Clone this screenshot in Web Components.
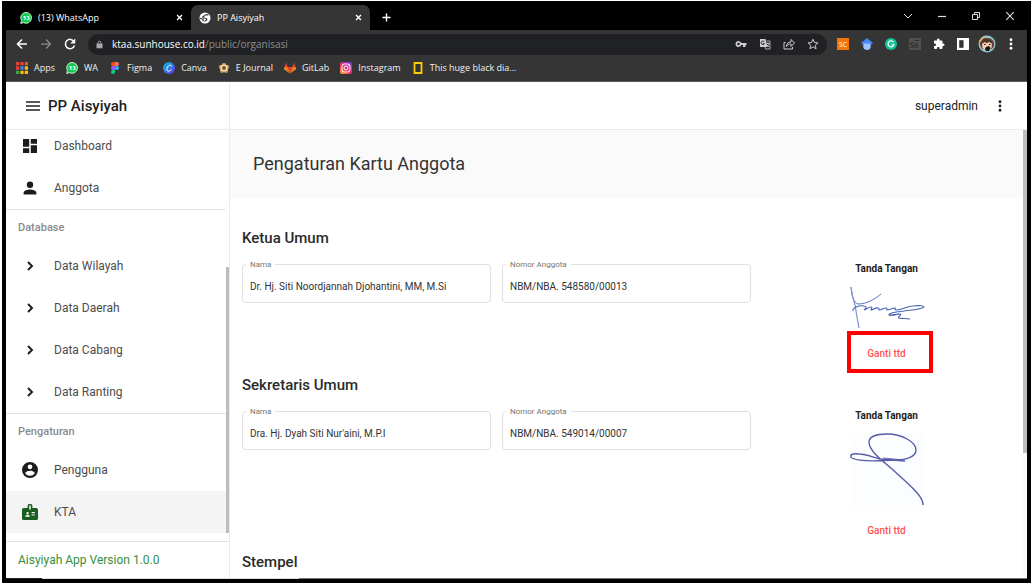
<!DOCTYPE html>
<html lang="id">
<head>
<meta charset="utf-8">
<meta name="viewport" content="width=device-width, initial-scale=1">
<title>PP Aisyiyah</title>
<style>
html, body { margin: 0; height: 100%; background: #fff; }
body { font-family: Roboto, "Liberation Sans", sans-serif; color: #212121; }
</style>
</head>
<body>
<browser-window>
  <browser-tabs slot="tabs"></browser-tabs>
  <browser-toolbar slot="toolbar"></browser-toolbar>
  <bookmark-bar slot="bookmarks"></bookmark-bar>
  <member-app></member-app>
</browser-window>
<script>
const ICONS = {
  whatsapp: '<svg viewBox="0 0 14 14"><path d="M.8 13.3 1.7 10A6.3 6.3 0 1 1 4.2 12.4z" fill="#16c750" stroke="#e8ffe8" stroke-width="1"/><text x="7.2" y="9.700" font-size="7" font-weight="700" text-anchor="middle" fill="#fff" font-family="Open Sans">13</text></svg>',
  globe: '<svg viewBox="0 0 24 24"><circle cx="12" cy="12" r="11" fill="#fff"/><path d="M19 6.500c-3-2-6-1-7 .5s-4 1-4.500 3 2 2.500 4.500 2.500 4 1 3.500 3-3 1-4 3.500" fill="none" stroke="#353535" stroke-width="2.400"/><path d="M2 13c2-.5 3 1 5 1.500s2 2.500 1 4" fill="none" stroke="#353535" stroke-width="2.400"/></svg>',
  close: '<svg viewBox="0 0 8 8"><path d="m1.2 1.2 5.6 5.6M6.8 1.2 1.2 6.8" stroke="currentColor" stroke-width="1.5" fill="none"/></svg>',
  plus: '<svg viewBox="0 0 10 10"><path d="M5 .5v9M.5 5h9" stroke="currentColor" stroke-width="1.6"/></svg>',
  caret: '<svg viewBox="0 0 10 10"><path d="m1 3 4 4 4-4" stroke="currentColor" fill="none"/></svg>',
  minimise: '<svg viewBox="0 0 10 10"><path d="M1 5.5h8" stroke="currentColor" stroke-width="1.2"/></svg>',
  restore: '<svg viewBox="0 0 10 10"><path d="M1.5 3.5h5v5h-5zM3.500 3.500v-2h5v5h-2" stroke="currentColor" fill="none"/></svg>',
  windowClose: '<svg viewBox="0 0 10 10"><path d="m1.200 1.200 7.600 7.600M8.800 1.200 1.200 8.800" stroke="currentColor" fill="none" stroke-width="1.100"/></svg>',
  back: '<svg viewBox="0 0 24 24"><path d="M22 12H4m8-9-9 9 9 9" fill="none" stroke="currentColor" stroke-width="3"/></svg>',
  forward: '<svg viewBox="0 0 24 24"><path d="M2 12h18m-8-9 9 9-9 9" fill="none" stroke="currentColor" stroke-width="2.500"/></svg>',
  reload: '<svg viewBox="0 0 24 24"><path d="M20 7A9.300 9.300 0 1 0 21 15" fill="none" stroke="currentColor" stroke-width="3"/><path d="M22.500 1v10h-10z" fill="currentColor"/></svg>',
  lock: '<svg viewBox="0 0 24 24"><path d="M18 9h-1V7A5 5 0 0 0 7 7v2H4v13h16V9zM9.200 9V7a2.800 2.800 0 0 1 5.600 0v2z" fill="currentColor"/></svg>',
  key: '<svg viewBox="0 0 24 24"><path d="M12.650 10a6 6 0 1 0 0 4H16v4h5v-4h2v-4zM7 14.500a2.500 2.500 0 1 1 0-5 2.500 2.500 0 0 1 0 5z" fill="currentColor"/></svg>',
  translate: '<svg viewBox="0 0 24 24"><path d="M2 2h11l4 16H2z" fill="currentColor"/><path d="M15 6h7v16h-9l-1-4M14 11h7m-3.500-2v2m2 0c-.5 3-2 5-4 7m0-5c1 2 3 4 5 5" fill="none" stroke="currentColor" stroke-width="1.600"/><path d="M10.500 7.500A3.500 3.500 0 1 0 11 11H8" fill="none" stroke="#202124" stroke-width="1.700"/></svg>',
  share: '<svg viewBox="0 0 24 24"><path d="M5 9H2v13h17v-4M7 17c0-6 3-9 9-9V3l7 7-7 7v-5c-4 0-7 1-9 5z" fill="none" stroke="currentColor" stroke-width="2"/></svg>',
  star: '<svg viewBox="0 0 24 24"><path d="m12 2.500 2.900 6.600 7.100.7-5.400 4.700 1.600 7L12 17.800l-6.200 3.700 1.600-7L2 9.800l7.100-.7z" fill="none" stroke="currentColor" stroke-width="2"/></svg>',
  sc: '<svg viewBox="0 0 12 12"><path d="M0 0h12v12H0z" fill="#f57408"/><text x="6" y="8.500" font-size="7" text-anchor="middle" fill="#fff" font-family="Open Sans">SC</text></svg>',
  scholar: '<svg viewBox="0 0 24 24"><path d="M12 0 0 10l6 5h12l6-5z" fill="#4285f4"/><circle cx="12" cy="16.500" r="7.500" fill="#a0c3ff"/><path d="M4.500 13.500Q12 5.500 19.500 13.500L17 11H7z" fill="#3367d6"/></svg>',
  grammarly: '<svg viewBox="0 0 24 24"><circle cx="12" cy="12" r="12" fill="#15c39a"/><path d="M17 8.500a6 6 0 1 0 .8 5H13" fill="none" stroke="#fff" stroke-width="2.400"/></svg>',
  selenium: '<svg viewBox="0 0 12 12"><path d="M0 0h12v12H0z" fill="#505050"/><text x="5" y="10" font-size="8" font-weight="700" text-anchor="middle" fill="#353535" font-family="Open Sans">Se</text><path d="M6 2.500h4" stroke="#2c2c2c"/></svg>',
  puzzle: '<svg viewBox="0 0 24 24"><path d="M20.500 11H19V7a2 2 0 0 0-2-2h-4V3.500a2.500 2.500 0 0 0-5 0V5H4a2 2 0 0 0-2 2v3.800h1.500a2.700 2.700 0 0 1 0 5.400H2V20a2 2 0 0 0 2 2h3.800v-1.500a2.700 2.700 0 0 1 5.400 0V22H17a2 2 0 0 0 2-2v-4h1.500a2.500 2.500 0 0 0 0-5z" fill="currentColor"/></svg>',
  panel: '<svg viewBox="0 0 11 11"><path d="M0 0h11v11H0z" fill="#fff"/><path d="M2 2h4v7H2z" fill="#353535"/></svg>',
  avatar: '<svg viewBox="0 0 18 18"><circle cx="9" cy="9" r="8.500" fill="#8fc4cc"/><path d="M2 10C1 5 4 3 9 3s8 3 7 8l-2 3H4z" fill="#6b4034"/><path d="M4 8q5-3 10 0l-.5 5q-4.500 5-9 0z" fill="#f3ccb0"/><path d="M3.500 9q0-4 5-5 5 0 6 5l-3-2-3 1-2-1z" fill="#4b332c"/><path d="M1.500 6q2-5 7-5.500-4 2-6 7z" fill="#f2b36b"/><path d="M6 9.500h1.500M11 9.500h1.500" stroke="#221b1b"/><path d="m8 12 3-1 1.500 2-1.500 3H8l-1-2z" fill="#141414"/></svg>',
  dots: '<svg viewBox="0 0 24 24"><g fill="currentColor"><circle cx="12" cy="3.500" r="2.800"/><circle cx="12" cy="12" r="2.800"/><circle cx="12" cy="20.500" r="2.800"/></g></svg>',
  apps: '<svg viewBox="0 0 11 11"><path d="M0 0h3v3H0zM4 0h3v3H4zM0 4h3v3H0z" fill="#ea4335"/><path d="M8 0h3v3H8z" fill="#e2562a"/><path d="M4 4h3v3H4z" fill="#4285f4"/><path d="M8 4h3v3H8zM8 8h3v3H8zM4 8h3v3H4z" fill="#fbbc04"/><path d="M0 8h3v3H0z" fill="#34a853"/></svg>',
  figma: '<svg viewBox="0 0 8 12"><path d="M2 0h2v4H2a2 2 0 0 1 0-4z" fill="#f24e1e"/><path d="M4 0h2a2 2 0 0 1 0 4H4z" fill="#ff7262"/><path d="M2 4h2v4H2a2 2 0 0 1 0-4z" fill="#a259ff"/><circle cx="6" cy="6" r="2" fill="#1abcfe"/><path d="M2 8h2v2a2 2 0 1 1-2-2z" fill="#0acf83"/></svg>',
  canva: '<svg viewBox="0 0 12 12"><defs><linearGradient id="c" x2="1" y2="1"><stop stop-color="#00c4cc"/><stop offset=".5" stop-color="#2d7fe8"/><stop offset="1" stop-color="#7d2ae8"/></linearGradient></defs><circle cx="6" cy="6" r="6" fill="url(#c)"/><path d="M8.400 4.500C8.500 3 6.800 2.600 5.300 4S3.300 8 4.600 8.900 7.800 8.500 8.300 7.500" fill="none" stroke="#fff"/></svg>',
  journal: '<svg viewBox="0 0 12 12"><g fill="#c2915a"><circle cx="6" cy="3" r="2.200"/><circle cx="9" cy="5" r="2.200"/><circle cx="8" cy="8.700" r="2.200"/><circle cx="4" cy="8.700" r="2.200"/><circle cx="3" cy="5" r="2.200"/></g><circle cx="6" cy="6" r="3.600" fill="#f6dfad"/><circle cx="6" cy="6" r="2" fill="#76552b"/></svg>',
  gitlab: '<svg viewBox="0 0 24 22"><path d="m12 22 4.500-13h-9z" fill="#e24329"/><path d="M12 22 7.500 9H1zM12 22l4.500-13H23z" fill="#fc6d26"/><path d="M1 9-.2 13 12 22zM23 9l1.200 4L12 22z" fill="#fca326"/><path d="m1 9 3-9 3.500 9zM23 9l-3-9-3.500 9z" fill="#e24329"/></svg>',
  instagram: '<svg viewBox="0 0 12 12"><defs><linearGradient id="i" x1="0" y1="1" x2=".8" y2="0"><stop stop-color="#ffb52e"/><stop offset=".45" stop-color="#f62e5e"/><stop offset="1" stop-color="#8134d9"/></linearGradient></defs><rect width="12" height="12" rx="2" fill="url(#i)"/><rect x="2" y="2" width="8" height="8" rx="2.300" fill="none" stroke="#fff"/><circle cx="6" cy="6" r="2" fill="none" stroke="#fff"/><circle cx="8.400" cy="3.700" r=".5" fill="#fff"/></svg>',
  natgeo: '<svg viewBox="0 0 9 12"><path d="M1 1h7v10H1z" fill="none" stroke="#fc0" stroke-width="1.800"/></svg>',
  menu: '<svg viewBox="0 0 14 10"><path d="M0 1h14M0 5h14M0 9h14" stroke="currentColor" stroke-width="1.400"/></svg>',
  dashboard: '<svg viewBox="3 3 18 18"><path d="M3 13h8V3H3zm0 8h8v-6H3zm10 0h8V11h-8zm0-18v6h8V3z" fill="currentColor"/></svg>',
  person: '<svg viewBox="2 2 20 20"><path d="M12 12a4 4 0 1 0 0-8 4 4 0 0 0 0 8zm0 2c-2.670 0-8 1.340-8 4v2h16v-2c0-2.660-5.330-4-8-4z" fill="currentColor"/></svg>',
  chevron: '<svg viewBox="2 2 20 20"><path d="m9.500 7 5 5-5 5" fill="none" stroke="currentColor" stroke-width="2.400"/></svg>',
  account: '<svg viewBox="2 2 20 20"><path d="M12 2a10 10 0 1 0 0 20 10 10 0 0 0 0-20zm0 3a3 3 0 1 1 0 6 3 3 0 0 1 0-6zm0 14.200a7.200 7.200 0 0 1-6-3.220c.03-1.990 4-3.080 6-3.080s5.970 1.090 6 3.080a7.200 7.200 0 0 1-6 3.220z" fill="currentColor"/></svg>',
  badge: '<svg viewBox="2 2 20 20"><path d="M20 7h-5V4a2 2 0 0 0-2-2h-2a2 2 0 0 0-2 2v3H4a2 2 0 0 0-2 2v11a2 2 0 0 0 2 2h16a2 2 0 0 0 2-2V9a2 2 0 0 0-2-2zM9 12a1.500 1.500 0 1 1 0 3 1.500 1.500 0 0 1 0-3zm3 6H6v-.750c0-1 2-1.500 3-1.500s3 .5 3 1.500zm1-9h-2V4h2zm5 7.500h-4V15h4zm0-3h-4V12h4z" fill="#1b5e20"/></svg>'
};

/* Every element renders its template once into an open shadow root. */
class BaseElement extends HTMLElement {
  connectedCallback() {
    if (this.shadowRoot) return;
    const t = document.createElement('template');
    t.innerHTML = '<style>*{box-sizing:border-box}' + this.css() + '</style>' + this.html();
    this.attachShadow({ mode: 'open' }).append(t.content.cloneNode(true));
  }
  css() { return ':host{display:block}'; }
  html() { return '<slot></slot>'; }
  attr(name) { return this.getAttribute(name) || ''; }
}

customElements.define('ui-icon', class extends BaseElement {
  css() { return `:host{display:inline-flex;flex:none;width:12px;height:12px}svg{display:block;width:100%;height:100%;overflow:visible}`; }
  html() { return ICONS[this.attr('name')]; }
});

customElements.define('browser-window', class extends BaseElement {
  css() { return `
    :host{display:flex;flex-direction:column;box-sizing:border-box;height:100vh;padding:1px 1px 2px 2px;background:#fff}
    .frame{flex:1;min-height:0;display:flex;flex-direction:column;background:#000;padding:0 4px 4px}
    .chrome{flex:none;font-family:"Open Sans","Noto Sans",sans-serif;color:#fff}
    .edge{flex:none;display:flex;height:1px;background:#777}
    .edge i:first-child{width:36px;background:#222}
    .edge i:last-child{width:257px;background:#ddd}
    ::slotted(member-app){flex:1;min-height:0}`; }
  html() { return `<div class="frame"><div class="chrome"><slot name="tabs"></slot><slot name="toolbar"></slot><slot name="bookmarks"></slot></div><slot></slot><div class="edge"><i></i><i></i></div></div>`; }
});

customElements.define('browser-tab', class extends BaseElement {
  css() { return `
    :host{display:flex;align-items:center;gap:6px;box-sizing:border-box;height:25px;padding:0 8px 0 14px;font-size:9px;line-height:14px}
    :host([active]){background:#353535;border-radius:7px 7px 0 0;padding-left:8px}
    span{flex:1;white-space:nowrap}
    button{border:0;background:none;color:#fff;padding:0;display:flex}
    button ui-icon{width:7px;height:7px}`; }
  html() { return `<ui-icon name="${this.attr('icon')}"></ui-icon><span><slot></slot></span><button aria-label="Tutup tab"><ui-icon name="close"></ui-icon></button>`; }
});

customElements.define('browser-tabs', class extends BaseElement {
  css() { return `
    :host{display:flex;align-items:flex-end;height:29px;background:#000}
    browser-tab{width:185px}
    browser-tab[active]{width:179px}
    button{border:0;background:none;color:inherit;padding:0;display:flex}
    .new{align-self:center;margin:3px 0 0 12px}
    .new ui-icon{width:9px;height:9px}
    .controls{margin-left:auto;align-self:center;display:flex;gap:24px;padding-right:12px;color:#ddd}
    .controls ui-icon{width:10px;height:10px}`; }
  html() { return `<browser-tab icon="whatsapp">(13) WhatsApp</browser-tab><browser-tab icon="globe" active>PP Aisyiyah</browser-tab>
    <button class="new" aria-label="Tab baru"><ui-icon name="plus"></ui-icon></button>
    <div class="controls">${['caret', 'minimise', 'restore', 'windowClose'].map(n => `<button aria-label="${n}"><ui-icon name="${n}"></ui-icon></button>`).join('')}</div>`; }
});

customElements.define('browser-toolbar', class extends BaseElement {
  css() { return `
    :host{display:flex;align-items:center;box-sizing:border-box;height:27px;background:#353535;padding:1px 10px 0 10px}
    button{border:0;background:none;color:inherit;padding:0;display:flex}
    .nav{display:flex;gap:12px;margin-right:12px}
    .dim{color:#8b8b8b}
    .address{flex:1;display:flex;align-items:center;height:21px;border-radius:11px;background:#202124;padding:0 8px 0 7px;font-size:10px;line-height:14px}
    .address>ui-icon{width:9px;height:9px;color:#aaa;margin-right:8px}
    .url{flex:1;color:#8e8f91;white-space:nowrap}
    .url b{font-weight:400;color:#fff}
    .actions{display:flex;gap:12px;color:#ccc}
    .extensions{display:flex;align-items:center;gap:12px;margin-left:10px}
    .avatar{width:18px;height:18px;margin:0 -3px}`; }
  html() {
    const b = (n, c = '') => `<button aria-label="${n}" class="${c}"><ui-icon name="${n}"></ui-icon></button>`;
    return `<div class="nav">${b('back')}${b('forward', 'dim')}${b('reload')}</div>
      <div class="address"><ui-icon name="lock"></ui-icon><span class="url"><b>ktaa.sunhouse.co.id</b>/public/organisasi</span>
      <div class="actions">${['key', 'translate', 'share', 'star'].map(n => b(n)).join('')}</div></div>
      <div class="extensions">${['sc', 'scholar', 'grammarly', 'selenium', 'puzzle', 'panel'].map(n => b(n)).join('')}<ui-icon class="avatar" name="avatar"></ui-icon>${b('dots')}</div>`;
  }
});

customElements.define('bookmark-bar', class extends BaseElement {
  css() { return `
    :host{display:flex;align-items:center;gap:11px;box-sizing:border-box;height:25px;padding:0 10px 2px;background:#353535;border-bottom:1px solid #5b5b5b;font-size:9px;line-height:14px}
    a{display:flex;align-items:center;gap:6px;color:#f1f1f1;text-decoration:none;white-space:nowrap}`; }
  html() {
    return [['apps', 'Apps'], ['whatsapp', 'WA'], ['figma', 'Figma'], ['canva', 'Canva'], ['journal', 'E Journal'], ['gitlab', 'GitLab'], ['instagram', 'Instagram'], ['natgeo', 'This huge black dia...']]
      .map(([i, t]) => `<a href="#"><ui-icon name="${i}"></ui-icon>${t}</a>`).join('');
  }
});

customElements.define('nav-item', class extends BaseElement {
  css() { return `
    :host{display:block}
    a{display:flex;align-items:center;gap:16px;height:42px;padding:0 16px;color:#4c4c4c;font-size:12px;line-height:20px;text-decoration:none}
    :host([active]) a{background:#f4f4f4}
    ui-icon{width:16px;height:16px;color:#1c1c1c}
    ui-icon[name=dashboard]{width:14px;height:14px;margin:0 1px}`; }
  html() { return `<a href="#"><ui-icon name="${this.attr('icon')}"></ui-icon><slot></slot></a>`; }
});

customElements.define('nav-group', class extends BaseElement {
  css() { return `
    :host{display:block;border-top:1px solid #e2e2e2}
    h2{margin:0;padding:0 12px;font-size:11px;font-weight:500;line-height:35px;color:#8a8a8a}`; }
  html() { return `<h2>${this.attr('label')}</h2><slot></slot>`; }
});

customElements.define('app-sidebar', class extends BaseElement {
  css() { return `
    :host{display:flex;flex-direction:column;box-sizing:border-box;min-height:0;border-right:1px solid #ebebeb}
    header{display:flex;align-items:center;gap:8px;height:48px;padding-left:20px;border-bottom:1px solid #ebebeb;flex:none}
    header button{border:0;background:none;padding:0;display:flex;color:#212121}
    header ui-icon{width:14px;height:10px}
    h1{margin:0;font-size:15px;font-weight:500;line-height:20px}
    .scroll{flex:1;min-height:0;display:flex}
    nav{flex:1;display:flex;flex-direction:column;justify-content:flex-end;overflow:hidden}
    nav>*{flex:none}
    .track{width:3px;display:flex;align-items:flex-end}
    .track i{flex:1;height:66%;background:#bdbdbd}
    footer{flex:none;margin-top:8px;border-top:1px solid #e2e2e2;padding:8px 12px;font-size:12px;line-height:20px;color:#388e3c}`; }
  html() { return `<header><button aria-label="Menu"><ui-icon name="menu"></ui-icon></button><h1>PP Aisyiyah</h1></header>
    <div class="scroll"><nav>
      <nav-item icon="dashboard">Dashboard</nav-item><nav-item icon="person">Anggota</nav-item>
      <nav-group label="Database"><nav-item icon="chevron">Data Wilayah</nav-item><nav-item icon="chevron">Data Daerah</nav-item><nav-item icon="chevron">Data Cabang</nav-item><nav-item icon="chevron">Data Ranting</nav-item></nav-group>
      <nav-group label="Pengaturan"><nav-item icon="account">Pengguna</nav-item><nav-item icon="badge" active>KTA</nav-item></nav-group>
    </nav><div class="track"><i></i></div></div>
    <footer>Aisyiyah App Version 1.0.0</footer>`; }
});

customElements.define('outlined-field', class extends BaseElement {
  css() { return `
    :host{display:block;position:relative;margin-top:3px}
    input{display:block;width:100%;height:39px;border:1px solid #e0e0e0;border-radius:4px;background:#fff;padding:5px 7px 0;font:400 10px/16px Roboto,sans-serif;color:#333;outline:0}
    label{position:absolute;left:4px;top:-5px;padding:0 4px;background:#fff;font-size:8px;line-height:12px;color:#757575}`; }
  html() { return `<input id="f" value="${this.attr('value')}"><label for="f">${this.attr('label')}</label>`; }
});

customElements.define('signature-card', class extends BaseElement {
  css() { return `
    :host{display:flex;flex-direction:column;align-items:center}
    h3{margin:0 0 9px;font-size:10px;font-weight:700;line-height:16px}
    ::slotted(svg){display:block;overflow:visible}
    .action{position:relative;margin-top:11px}
    button{display:block;height:28px;border:0;padding:0 8px;background:none;color:#ff5252;font:500 10px/16px Roboto,sans-serif}
    :host([highlight]) .action::after{content:"";position:absolute;inset:-9px -19px -5px -12px;border:4px solid #f00;pointer-events:none}`; }
  html() { return `<h3>Tanda Tangan</h3><slot></slot><div class="action"><button>Ganti ttd</button></div>`; }
});

customElements.define('card-section', class extends BaseElement {
  css() { return `
    :host{display:block;margin-bottom:7px}
    h2{margin:0 0 13px;font-size:15px;font-weight:500;line-height:20px;color:#2a2a2a}
    .row{display:grid;grid-template-columns:repeat(3,minmax(0,1fr));gap:11px;align-items:start}`; }
  html() { return `<h2>${this.attr('heading')}</h2><div class="row"><slot></slot></div>`; }
});

customElements.define('member-app', class extends BaseElement {
  css() { return `
    :host{display:grid;grid-template-columns:224px minmax(0,1fr);grid-template-rows:minmax(0,1fr);background:#fff;overflow:hidden}
    .main{display:flex;flex-direction:column;min-width:0;min-height:0}
    header{flex:none;display:flex;align-items:center;justify-content:flex-end;gap:16px;height:48px;padding-right:21px;border-bottom:1px solid #ebebeb;font-size:12px;line-height:20px}
    header button{border:0;background:none;padding:0;display:flex;color:#212121}
    .body{flex:1;display:flex;min-height:0}
    .page{flex:1;min-width:0;overflow:hidden}
    .title{margin:0;padding:0 23px 2px;background:#fafafa;font-size:18px;font-weight:400;line-height:67px;color:#333}
    .sections{padding:29px 12px 0}
    .track{flex:none;width:4px;background:#fafafa}
    .track i{display:block;height:72%;background:#bdbdbd}`; }
  html() { return `<app-sidebar></app-sidebar><div class="main">
    <header><span>superadmin</span><button aria-label="Lainnya"><ui-icon name="dots"></ui-icon></button></header>
    <div class="body"><main class="page"><h1 class="title">Pengaturan Kartu Anggota</h1><div class="sections">
      <card-section heading="Ketua Umum">
        <outlined-field label="Nama" value="Dr. Hj. Siti Noordjannah Djohantini, MM, M.Si"></outlined-field>
        <outlined-field label="Nomor Anggota" value="NBM/NBA. 548580/00013"></outlined-field>
        <signature-card highlight><svg width="74" height="43" viewBox="0 0 74 43" fill="none" stroke="#4a62b8"><path d="M1 1c1 9 2 15 7 17 9 0 17-5 23-10" stroke-width=".9"/><path d="M1 1c1 8 2 11 4 18l2 12 2 11" stroke-width="1.200" stroke="#8090cf"/><path d="M3 25c-1-3 6-6 11-5 4 1 1 3 0 4 3-1 4-3 7-3 2 0 0 2 0 3 3 0 4-3 7-2 2 0 0 1 1 2 3 0 4-2 7-2 2 0 0 1 1 2 3 0 5-2 8-2 1 0-1 2 1 2 6 0 11-4 17-4 7-1 11 0 11 1-1 2-12 3-20 4-7 1-16 2-15 4 1 1 6-1 11-1 3 0-3 3-1 4 3 1 7 0 11 1" stroke-width="1.100"/><path d="M39 29q5 1 10-1" stroke-width="1"/></svg></signature-card>
      </card-section>
      <card-section heading="Sekretaris Umum">
        <outlined-field label="Nama" value="Dra. Hj. Dyah Siti Nur'aini, M.P.I"></outlined-field>
        <outlined-field label="Nomor Anggota" value="NBM/NBA. 549014/00007"></outlined-field>
        <signature-card><svg width="74" height="73" viewBox="0 0 74 73" fill="none" stroke="#585da8" stroke-width="1.400"><path d="M0 1h74v72H0z" fill="#fcfdff" stroke="none"/><path d="M73 72c1-9-18-24-31-36C29 25 19 17 19 9 19 3 28 1 37 1c15 0 29 8 29 16 0 7-10 10-21 10C30 28 9 29 2 25c-4-3 1-5 7-4 7 0 13 3 21 5l25 2"/><path d="M33 25q10 1 22 2" stroke-width=".9"/></svg></signature-card>
      </card-section>
      <card-section heading="Stempel"></card-section>
    </div></main><div class="track"><i></i></div></div></div>`; }
});
</script>
</body>
</html>
